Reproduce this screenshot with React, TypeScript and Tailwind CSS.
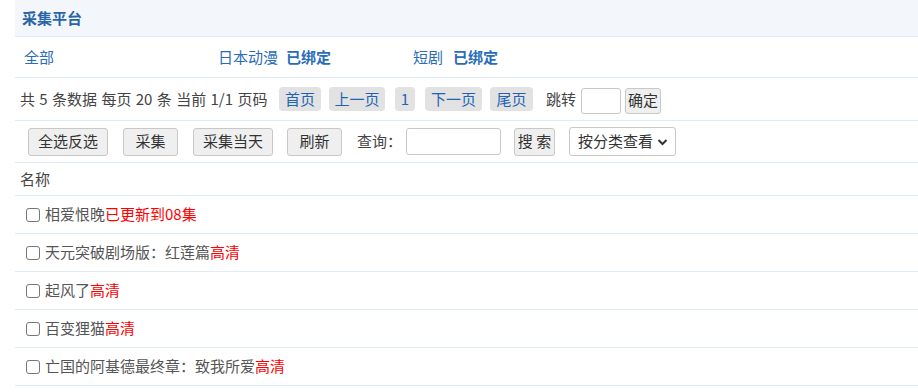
const items = [
  { name: "相爱恨晚", tag: "已更新到08集" },
  { name: "天元突破剧场版：红莲篇", tag: "高清" },
  { name: "起风了", tag: "高清" },
  { name: "百变狸猫", tag: "高清" },
  { name: "亡国的阿基德最终章：致我所爱", tag: "高清" },
];

const pageBtn = "h-6 rounded-sm bg-[#e2e2e2] text-[#1f64b4] flex items-center justify-center";
const actBtn = "h-[28px] border border-[#c8c8c8] rounded-[3px] bg-[#efefef] text-[#333] flex items-center justify-center";

const App = () => {
  return (
    <div
      className="w-[918px] h-[392px] bg-white text-[15px] text-[#555] overflow-hidden"
      style={{ fontFamily: '"Noto Sans CJK SC", "Noto Sans", sans-serif' }}>
      <div className="ml-[15px]">
        <div className="h-[37px] bg-[#f3f7fb] border-b border-[#deeaf6] flex items-center pl-[7px]">
          <span className="text-[15px] font-bold text-[#2a64a8]">采集平台</span>
        </div>
        <div className="h-[41px] border-b border-[#deeaf6] flex items-center text-[#2a6cb8]">
          <span className="ml-[9px] w-[194px]">全部</span>
          <span>日本动漫</span>
          <span className="ml-[8px] w-[127px] font-bold">已绑定</span>
          <span>短剧</span>
          <span className="ml-[10px] font-bold">已绑定</span>
        </div>
        <div className="h-[43px] border-b border-[#deeaf6] flex items-center pl-[5px]">
          <span className="text-[#444] w-[259px] whitespace-nowrap [word-spacing:1px]">共 5 条数据 每页 20 条 当前 1/1 页码</span>
          <span className={pageBtn + " w-[42px]"}>首页</span>
          <span className={pageBtn + " w-[56px] ml-[8px]"}>上一页</span>
          <span className={pageBtn + " w-[20px] ml-[10px]"}>1</span>
          <span className={pageBtn + " w-[57px] ml-[10px]"}>下一页</span>
          <span className={pageBtn + " w-[43px] ml-[8px]"}>尾页</span>
          <span className="ml-[13px] text-[#444]">跳转</span>
          <input className="ml-[5px] w-[40px] h-[26px] border border-[#c8c8c8] rounded-[3px] mt-[3px]" />
          <button className="ml-[4px] w-[36px] h-[26px] border border-[#c8c8c8] rounded-[3px] bg-[#efefef] text-[#333] mt-[3px] flex items-center justify-center">确定</button>
        </div>
        <div className="h-[42px] border-b border-[#deeaf6] flex items-center pl-[13px]">
          <button className={actBtn + " w-[80px]"}>全选反选</button>
          <button className={actBtn + " w-[55px] ml-[15px]"}>采集</button>
          <button className={actBtn + " w-[80px] ml-[15px]"}>采集当天</button>
          <button className={actBtn + " w-[55px] ml-[14px]"}>刷新</button>
          <span className="ml-[15px] text-[#444]">查询：</span>
          <input className="ml-[4px] w-[95px] h-[27px] border border-[#c8c8c8] rounded-[3px]" />
          <button className="ml-[13px] w-[41px] h-[28px] border border-[#c8c8c8] rounded-[3px] bg-[#efefef] text-[#333] flex items-center justify-center whitespace-nowrap">搜 索</button>
          <div className="ml-[14px] h-[29px] w-[107px] border border-[#c8c8c8] rounded-[3px] flex items-center justify-between pl-[8px] pr-[7px] text-[#333]">
            <span>按分类查看</span>
            <svg width="11" height="8" viewBox="0 0 11 8">
              <path d="M1.5 2 L5.5 6 L9.5 2" fill="none" stroke="#333" strokeWidth="2" />
            </svg>
          </div>
        </div>
        <div className="h-[33px] border-b border-[#deeaf6] flex items-center pl-[5px] text-[#444]">
          名称
        </div>
        {items.map((it) => (
          <div key={it.name} className="h-[38px] border-b border-[#deeaf6] flex items-center pl-[11px]">
            <span className="shrink-0 w-[14px] h-[14px] border-[1.5px] border-[#767676] rounded-[3px] bg-white" />
            <span className="ml-[5px]">{it.name}</span>
            <span className="text-[#ff0000]">{it.tag}</span>
          </div>
        ))}
      </div>
    </div>
  );
};

export default App;
